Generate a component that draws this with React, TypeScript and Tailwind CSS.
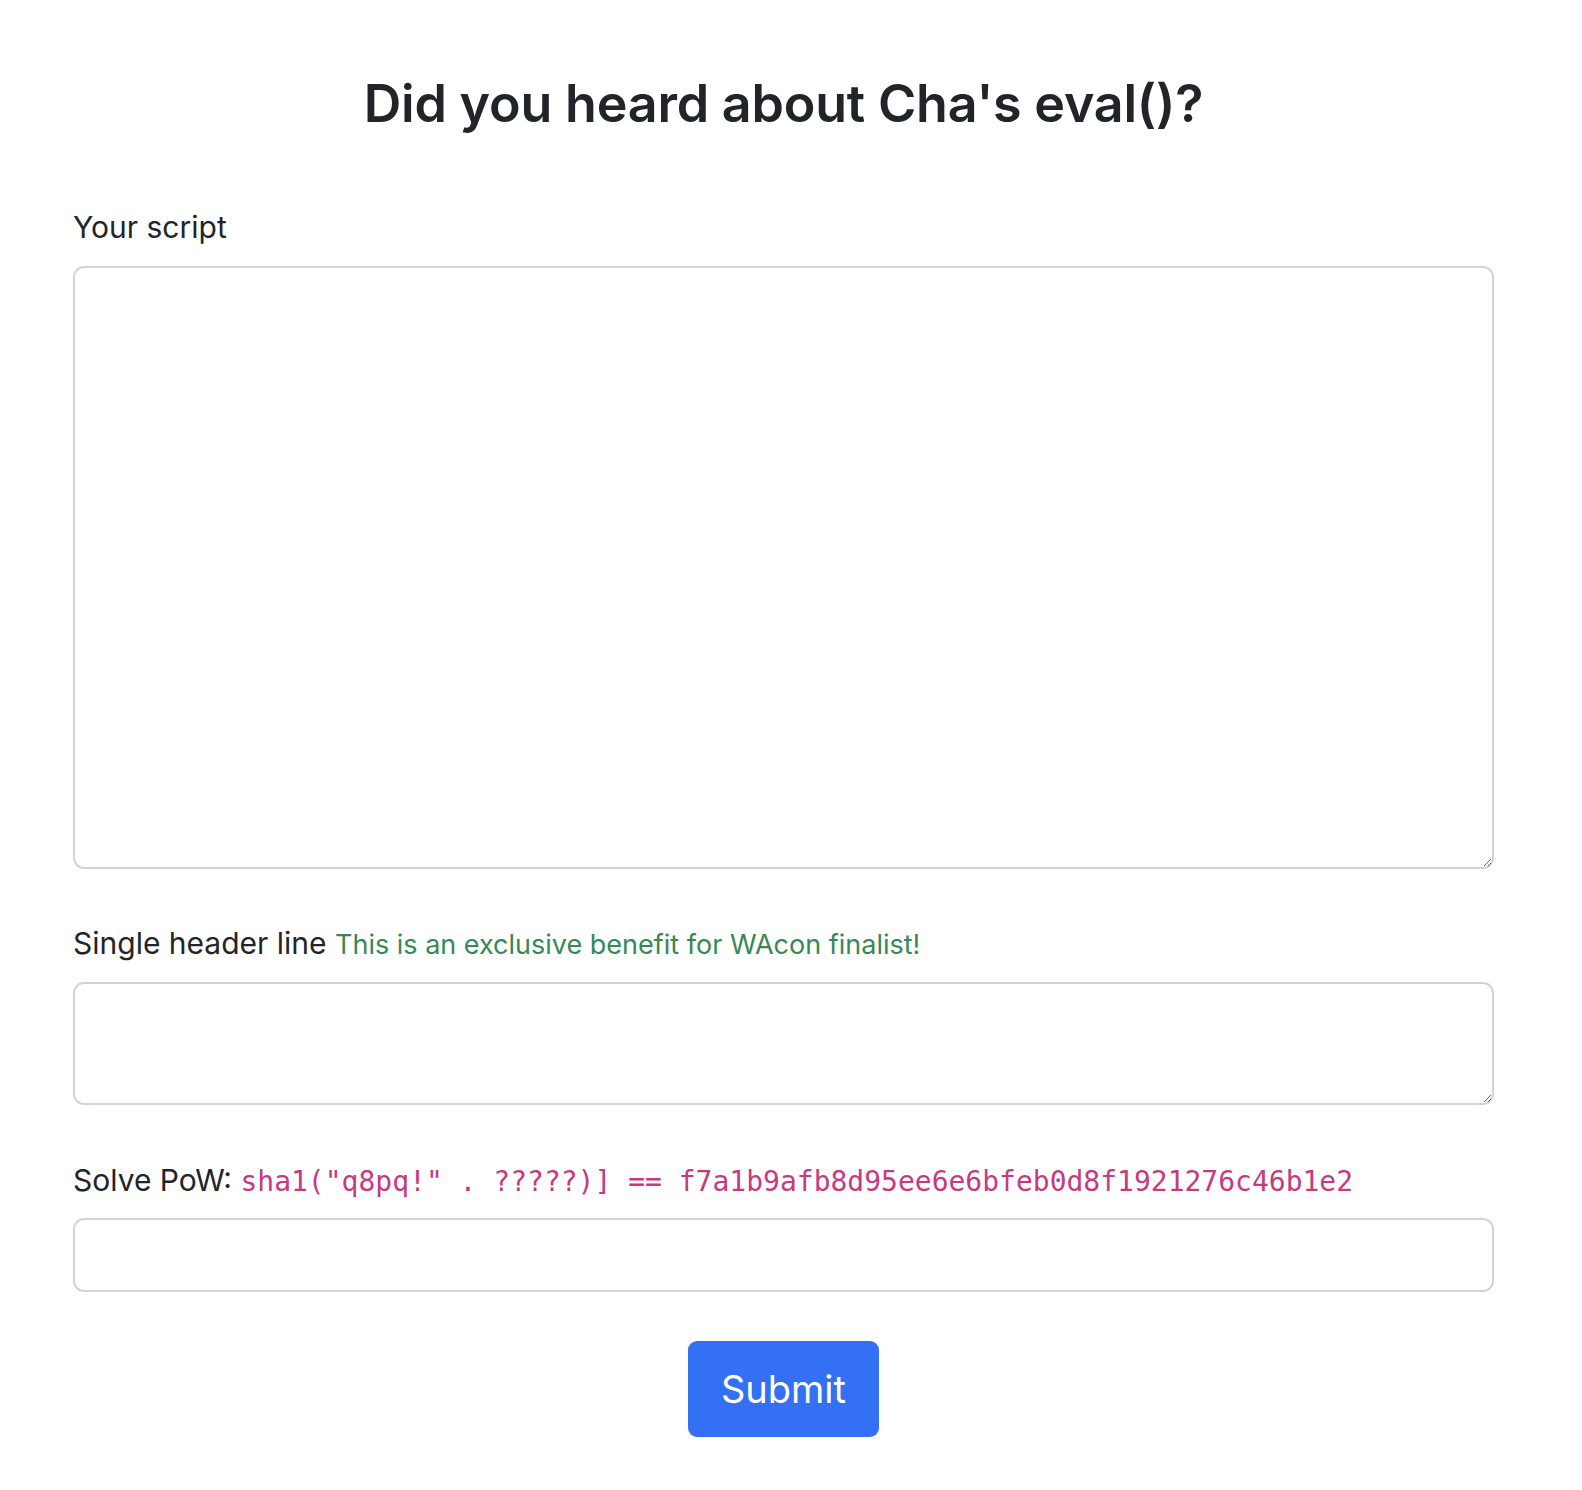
import React from 'react'

const SALT = 'q8pq!'
const TARGET = 'f7a1b9afb8d95ee6e6bfeb0d8f1921276c46b1e2'

// challenge form: script, one header line, proof of work
export default function App() {
  return (
    <div className="min-h-[1490px] bg-white text-[#212529] font-['Inter','Noto_Sans',sans-serif]">
      <div className="pl-[73px] pr-[88px] pt-[71px]">
        <h2 className="text-center text-[52px] leading-[65px] font-semibold tracking-[-0.2px]">
          Did you heard about Cha's eval()?
        </h2>

        <form className="flex flex-col" onSubmit={e => e.preventDefault()}>
          <label htmlFor="script" className="mt-[69px] text-[30px] leading-[45px]">
            Your script
          </label>
          <textarea
            id="script"
            className="mt-4 h-[603px] w-full rounded-[11px] border-2 border-[#d0d4d9] bg-white px-6 py-3 text-[30px] outline-none"
          />

          <label htmlFor="header" className="mt-[52px] text-[30px] leading-[45px]">
            Single header line{' '}
            <span className="text-[27px] leading-none text-[#378855]">
              This is an exclusive benefit for WAcon finalist!
            </span>
          </label>
          <textarea
            id="header"
            rows={2}
            className="mt-4 h-[123px] w-full rounded-[11px] border-2 border-[#d0d4d9] bg-white px-6 py-3 text-[30px] outline-none"
          />

          <label htmlFor="pow" className="mt-[53px] text-[30px] leading-[45px]">
            Solve PoW:{' '}
            <code className="font-['DejaVu_Sans_Mono',monospace] text-[28px] leading-none text-[#c83a80]">
              sha1("{SALT}" . ?????)] == {TARGET}
            </code>
          </label>
          <input
            id="pow"
            type="text"
            className="mt-[15px] h-[74px] w-full rounded-[11px] border-2 border-[#d0d4d9] bg-white px-6 text-[30px] outline-none"
          />

          <div className="mt-[49px] flex justify-center">
            <button
              type="submit"
              className="h-[96px] w-[191px] rounded-[9px] bg-[#3370f3] text-[38px] text-white"
            >
              Submit
            </button>
          </div>
        </form>
      </div>
    </div>
  )
}
